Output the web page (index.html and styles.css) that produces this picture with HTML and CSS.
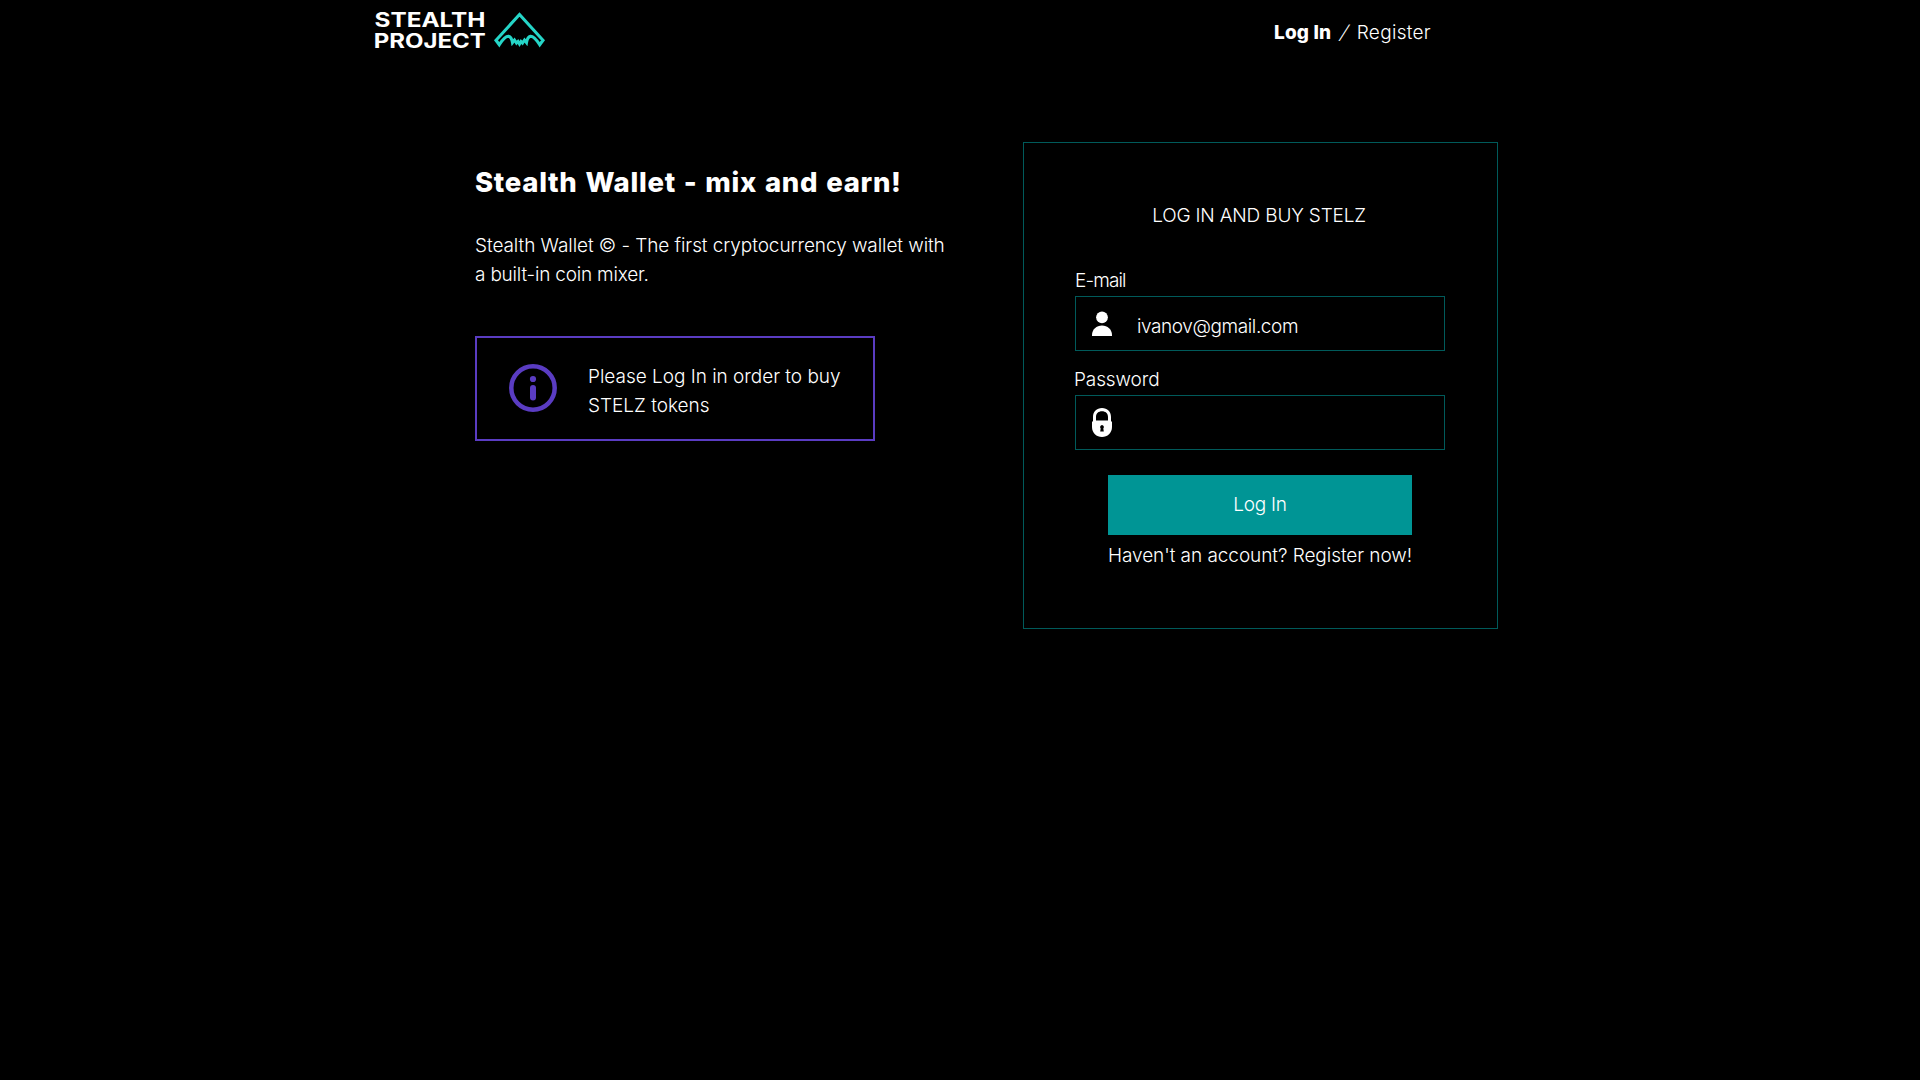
FILE: index.html
```html
<!DOCTYPE html>
<html lang="en">
<head>
<meta charset="utf-8">
<title>Stealth Wallet</title>
<link rel="stylesheet" href="styles.css">
</head>
<body>
<header class="header">
  <a class="brand">
    <svg class="brand-logo" width="172" height="42" viewBox="0 0 172 42">
      <text class="brand-name" x="-0.500" y="17.700" textLength="111" lengthAdjust="spacingAndGlyphs">STEALTH</text>
      <text class="brand-name" x="-1.300" y="38.700" textLength="112" lengthAdjust="spacingAndGlyphs">PROJECT</text>
      <path class="brand-mark" d="M144.500 5.500L121 31.300L124.300 35.700Q130 27 133.500 27.300Q136.500 28 137.500 33.500L139.500 31L141.500 34L143 32.500L144.500 35L146 32.500L147.500 34L149.500 31L151.500 33.500Q152.500 28 155.500 27.300Q159 27 164.700 35.700L168 31.300Z"/>
    </svg>
  </a>
  <nav class="nav"><a class="nav-active">Log In</a><span class="nav-slash">/</span><a class="nav-register">Register</a></nav>
</header>
<main class="main">
  <section class="intro">
    <h1 class="headline">Stealth Wallet - mix and earn!</h1>
    <p class="lead"><span class="lead-first">Stealth Wallet © - The first cryptocurrency wallet with</span><br><span class="lead-second">a built-in coin mixer.</span></p>
    <div class="notice">
      <svg class="notice-icon" width="48" height="48" viewBox="0 0 48 48">
        <circle class="info-ring" cx="24" cy="24" r="21.700"/>
        <circle class="info-fill" cx="24" cy="15" r="3.100"/>
        <rect class="info-fill" x="21" y="21" width="6" height="15.500" rx="3"/>
      </svg>
      <p class="notice-text">Please Log In in order to buy<br>STELZ tokens</p>
    </div>
  </section>
  <form class="card">
    <h2 class="card-title">LOG IN AND BUY STELZ</h2>
    <label class="label label-email">E-mail</label>
    <div class="field">
      <svg class="icon" width="20" height="30" viewBox="0 0 20 30">
        <circle cx="10" cy="8.300" r="5.900"/>
        <path d="M0 27V26C0 20.500 4.500 16.500 10 16.500S20 20.500 20 26V27Z"/>
      </svg>
      <span class="value">ivanov@gmail.com</span>
    </div>
    <label class="label label-password">Password</label>
    <div class="field">
      <svg class="icon" width="20" height="30" viewBox="0 0 20 30">
        <path fill-rule="evenodd" d="M0 13.500H1V9C1 3.500 4.700 0 10 0S19 3.500 19 9V13.500H20V19C20 25 15.500 29 10 29S0 25 0 19ZM4 12.500H16V9C16 5.300 13.500 3.200 10 3.200S4 5.300 4 9ZM10 17A2.100 2.100 0 0 0 8.700 20.500L8.200 23.500H11.800L11.300 20.500A2.100 2.100 0 0 0 10 17Z"/>
      </svg>
    </div>
    <button class="submit" type="button">Log In</button>
    <a class="register">Haven't an account? Register now!</a>
  </form>
</main>
</body>
</html>
```
FILE: styles.css
```css
* { box-sizing: border-box; }
body {
  margin: 0;
  min-height: 1080px;
  background: #000;
  color: #fff;
  font-family: Inter, "Liberation Sans", sans-serif;
  font-weight: 300;
  font-size: 19px;
  line-height: 29px;
}
h1, h2, p { margin: 0; font-weight: 300; }
.header {
  display: flex;
  justify-content: space-between;
  width: 1056px;
  height: 142px;
  margin-left: 375px;
  padding-top: 9px;
}
.brand-logo { display: block; overflow: visible; }
.brand-name { fill: #fff; font: 700 19.5px Inter, sans-serif; }
.brand-mark { fill: none; stroke: #25d5c7; stroke-width: 3.1; }
.nav {
  display: flex;
  align-items: flex-start;
  padding-top: 9px;
  width: 157px;
  white-space: nowrap;
}
.nav-active { font-weight: 800; width: 67px; letter-spacing: 0.15px; }
.nav-slash { width: 16px; transform: skewX(-20deg); }
.nav-register { letter-spacing: 0.3px; }
.main {
  display: flex;
  justify-content: space-between;
  width: 1023px;
  margin-left: 475px;
}
.intro { width: 480px; padding-top: 23px; white-space: nowrap; }
.headline {
  font-size: 27.5px;
  font-weight: 800;
  line-height: 34px;
  letter-spacing: 0.7px;
  word-spacing: 1.2px;
  margin-bottom: 32px;
}
.lead-first { letter-spacing: -0.07px; }
.lead-second { letter-spacing: -0.2px; }
.notice {
  display: flex;
  align-items: center;
  gap: 31px;
  width: 400px;
  height: 105px;
  margin-top: 47px;
  padding-left: 32px;
  border: 2px solid #5a3cc2;
}
.notice-icon { margin-bottom: 2px; }
.notice-text { padding-top: 4px; letter-spacing: -0.02px; }
.info-ring { fill: none; stroke: #5a3cc2; stroke-width: 4.5; }
.info-fill { fill: #5a3cc2; }
.card {
  display: flex;
  flex-direction: column;
  width: 475px;
  height: 487px;
  padding: 58px 52px 0 51px;
  border: 1px solid #005a5a;
  white-space: nowrap;
}
.card-title {
  align-self: center;
  font-size: 19px;
  letter-spacing: -0.18px;
  margin: 0 2px 36px 0;
}
.label { display: block; margin-bottom: 1px; }
.label-email { letter-spacing: -0.85px; }
.label-password { letter-spacing: -0.1px; text-indent: -1px; }
.field {
  display: flex;
  align-items: center;
  height: 55px;
  padding-left: 16px;
  border: 1px solid #005a5a;
}
.field + .label { margin-top: 14px; }
.icon { fill: #fff; }
.value { padding: 5px 0 0 25px; letter-spacing: -0.4px; }
.submit {
  align-self: center;
  width: 304px;
  height: 60px;
  flex: none;
  margin: 25px 0 6px;
  padding: 0 0 1px;
  border: 0;
  background: #009595;
  color: #fff;
  font: inherit;
  letter-spacing: -0.25px;
}
.register { align-self: center; letter-spacing: -0.06px; }
```
